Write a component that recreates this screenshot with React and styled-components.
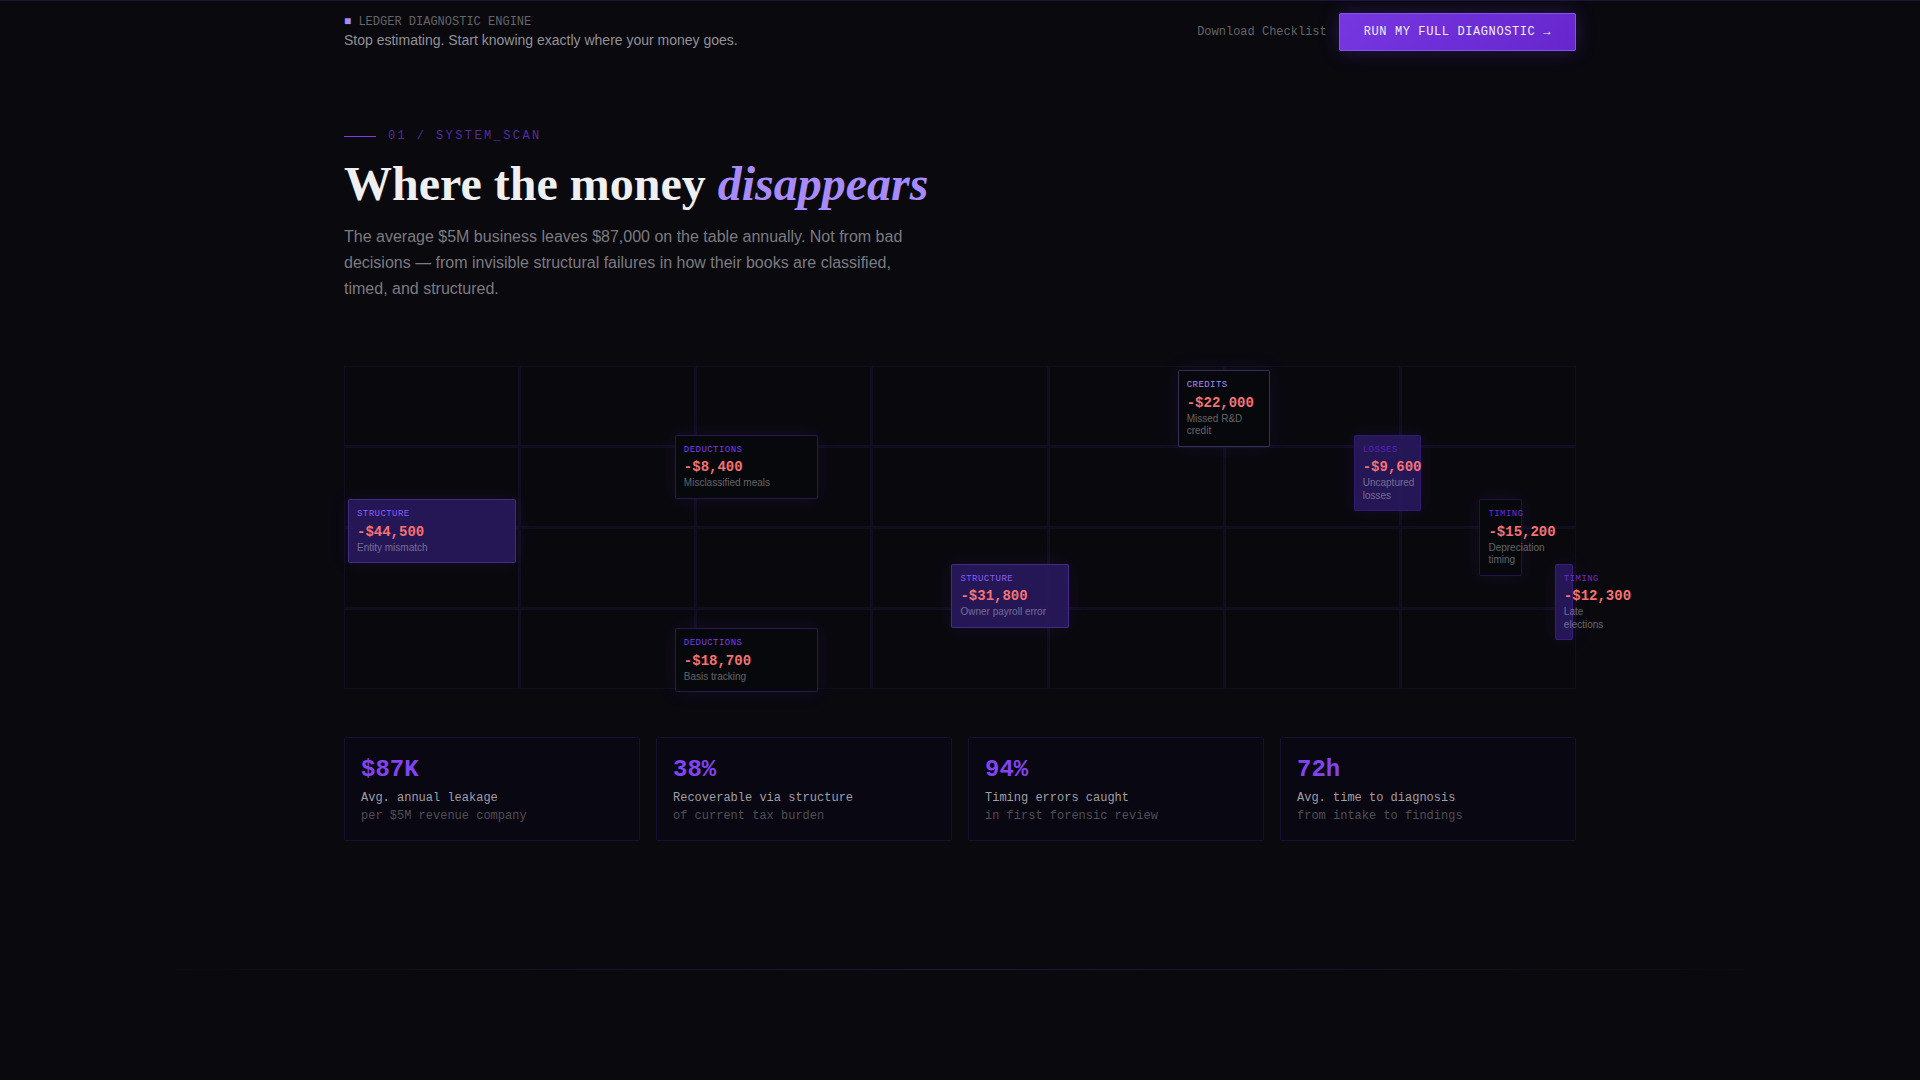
import React from "react";
import styled, { createGlobalStyle } from 'styled-components';

const sans = `"Liberation Sans", Arial, sans-serif`;
const serif = `"Liberation Serif", "Times New Roman", serif`;
const mono = `"Liberation Mono", "Courier New", monospace`;

const violet = '#7c3aed';
const lilac = '#a78bfa';
const deep = '#6d28d9';

const COLS = 7;
const ROWS = 4;

// hot nodes get the purple fill, accent colours the tag and border
const leaks = [
  { tag: 'STRUCTURE', amount: '-$44,500', note: 'Entity mismatch', col: 0, level: 2, hot: true, accent: '#8b5cf6' },
  { tag: 'DEDUCTIONS', amount: '-$8,400', note: 'Misclassified meals', col: 1, level: 1, accent: violet },
  { tag: 'DEDUCTIONS', amount: '-$18,700', note: 'Basis tracking', col: 1, level: 4, accent: violet },
  { tag: 'STRUCTURE', amount: '-$31,800', note: 'Owner payroll error', col: 2, level: 3, hot: true, accent: '#8b5cf6' },
  { tag: 'CREDITS', amount: '-$22,000', note: 'Missed R&D credit', col: 3, level: 0, accent: lilac },
  { tag: 'LOSSES', amount: '-$9,600', note: 'Uncaptured losses', col: 4, level: 1, hot: true, accent: '#5b21b6' },
  { tag: 'TIMING', amount: '-$15,200', note: 'Depreciation timing', col: 5, level: 2, accent: deep },
  { tag: 'TIMING', amount: '-$12,300', note: 'Late elections', col: 6, level: 3, hot: true, accent: deep },
];

const stats = [
  { value: '$87K', label: 'Avg. annual leakage', sub: 'per $5M revenue company' },
  { value: '38%', label: 'Recoverable via structure', sub: 'of current tax burden' },
  { value: '94%', label: 'Timing errors caught', sub: 'in first forensic review' },
  { value: '72h', label: 'Avg. time to diagnosis', sub: 'from intake to findings' },
];

const TopBar = () => (
  <Bar>
    <BarInner>
      <div>
        <Brand><Square>■</Square> LEDGER DIAGNOSTIC ENGINE</Brand>
        <Tagline>Stop estimating. Start knowing exactly where your money goes.</Tagline>
      </div>
      <Actions>
        <Checklist href="#checklist">Download Checklist</Checklist>
        <RunButton type="button">RUN MY FULL DIAGNOSTIC →</RunButton>
      </Actions>
    </BarInner>
  </Bar>
);

const LeakMap = () => (
  <Map>
    {Array.from({ length: COLS * ROWS }, (_, i) => <Cell key={i} />)}
    {leaks.map(({ tag, amount, note, col, level, hot, accent }) => (
      <Node key={amount} $col={col} $level={level} $hot={hot} $accent={accent}>
        <Tag $accent={accent}>{tag}</Tag>
        <Amount>{amount}</Amount>
        <Note>{note}</Note>
      </Node>
    ))}
  </Map>
);

const App = () => (
  <>
    <GlobalStyle />
    <TopBar />
    <Scan>
      <Container>
        <Eyebrow>01 / SYSTEM_SCAN</Eyebrow>
        <Title>Where the money <em>disappears</em></Title>
        <Lead>
          The average $5M business leaves $87,000 on the table annually. Not from bad
          decisions — from invisible structural failures in how their books are classified,
          timed, and structured.
        </Lead>
        <LeakMap />
        <Stats>
          {stats.map(({ value, label, sub }) => (
            <Stat key={value}>
              <StatValue>{value}</StatValue>
              <StatLabel>{label}</StatLabel>
              <StatSub>{sub}</StatSub>
            </Stat>
          ))}
        </Stats>
      </Container>
    </Scan>
    <Divider />
  </>
);

export default App;

const GlobalStyle = createGlobalStyle`
  *, *::before, *::after {
    box-sizing: border-box;
  }
  body {
    margin: 0;
    min-height: 100vh;
    background: #09090e;
    color: #f0eff0;
    font-family: ${sans};
  }
  h2, p {
    margin: 0;
  }
`;

const Container = styled.div`
  max-width: 1280px;
  margin: 0 auto;
  padding: 0 24px;
`;

const Bar = styled.header`
  border-top: 1px solid #1f1440;
`;

const BarInner = styled(Container)`
  display: flex;
  align-items: center;
  justify-content: space-between;
  padding-top: 12px;
  padding-bottom: 12px;
`;

const Brand = styled.p`
  font: 12px/16px ${mono};
  color: #656468;
`;

const Square = styled.span`
  color: ${lilac};
`;

const Tagline = styled.p`
  font-size: 14px;
  line-height: 20px;
  color: #939296;
`;

const Actions = styled.div`
  display: flex;
  align-items: center;
  gap: 12px;
`;

const Checklist = styled.a`
  font: 12px/18px ${mono};
  color: #656468;
  text-decoration: none;
`;

const RunButton = styled.button`
  padding: 9px 24px;
  border: 1px solid #8454e8;
  border-radius: 2px;
  background: linear-gradient(135deg, #7637e1, #6726cd);
  box-shadow: 0 0 20px rgba(124, 58, 237, 0.28);
  color: #f0eff0;
  font: 12px/18px ${mono};
  letter-spacing: 0.05em;
  cursor: pointer;
`;

const Scan = styled.section`
  padding: 64px 0 128px;
`;

const Eyebrow = styled.p`
  display: flex;
  align-items: center;
  gap: 12px;
  margin-bottom: 15px;
  font: 12px/18px ${mono};
  letter-spacing: 0.2em;
  color: #5429a4;

  &::before {
    content: '';
    width: 32px;
    height: 1px;
    background: ${violet};
  }
`;

const Title = styled.h2`
  margin-bottom: 16px;
  font: 700 48px/48px ${serif};

  em {
    color: ${lilac};
  }
`;

const Lead = styled.p`
  max-width: 576px;
  margin-bottom: 64px;
  font-size: 16px;
  line-height: 26px;
  color: #7c7b80;
`;

const Map = styled.div`
  position: relative;
  display: grid;
  grid-template-columns: repeat(${COLS}, 1fr);
  grid-auto-rows: 80px;
  gap: 1px;
  margin-bottom: 48px;
  background: #100c1d;
`;

const Cell = styled.div`
  border: 1px solid #120e21;
  background: #09090d;
`;

// nodes bunch up and narrow toward the right edge
const nodeLeft = (col) => (1 - (1 - col / COLS) ** 2) * 100;
const nodeWidth = (col) => ((1 - col / COLS) / COLS) * 100;

const Node = styled.div`
  position: absolute;
  top: ${({ $level }) => $level * 20}%;
  left: ${({ $col }) => nodeLeft($col)}%;
  width: calc(${({ $col }) => nodeWidth($col)}% - 8px);
  margin: 4px;
  padding: 8px;
  border: 1px solid ${({ $accent }) => $accent}4d;
  border-radius: 2px;
  background: ${({ $hot }) => ($hot ? 'rgba(40, 24, 92, 0.93)' : 'rgba(6, 8, 13, 0.96)')};
  box-shadow: 0 0 20px rgba(124, 58, 237, 0.11);
`;

const Tag = styled.p`
  font: 9px/1.5 ${mono};
  letter-spacing: 0.05em;
  color: ${({ $accent }) => $accent};
`;

const Amount = styled.p`
  font: 700 14px/20px ${mono};
  color: #f87171;
`;

const Note = styled.p`
  font-size: 10px;
  line-height: 1.25;
  color: rgba(240, 239, 242, 0.4);
`;

const Stats = styled.div`
  display: grid;
  grid-template-columns: repeat(4, 1fr);
  gap: 16px;
`;

const Stat = styled.div`
  padding: 16px;
  border: 1px solid #161133;
  border-radius: 2px;
  background: #090711;
`;

const StatValue = styled.p`
  margin-bottom: 4px;
  font: 700 24px/32px ${mono};
  color: #8144f0;
`;

const StatLabel = styled.p`
  margin-bottom: 2px;
  font: 12px/16px ${mono};
  color: #a09fa4;
`;

const StatSub = styled.p`
  font: 12px/16px ${mono};
  color: #4f4e54;
`;

const Divider = styled.div`
  height: 1px;
  background: linear-gradient(to right, transparent 5%, #1f1842, transparent 95%);
`;
